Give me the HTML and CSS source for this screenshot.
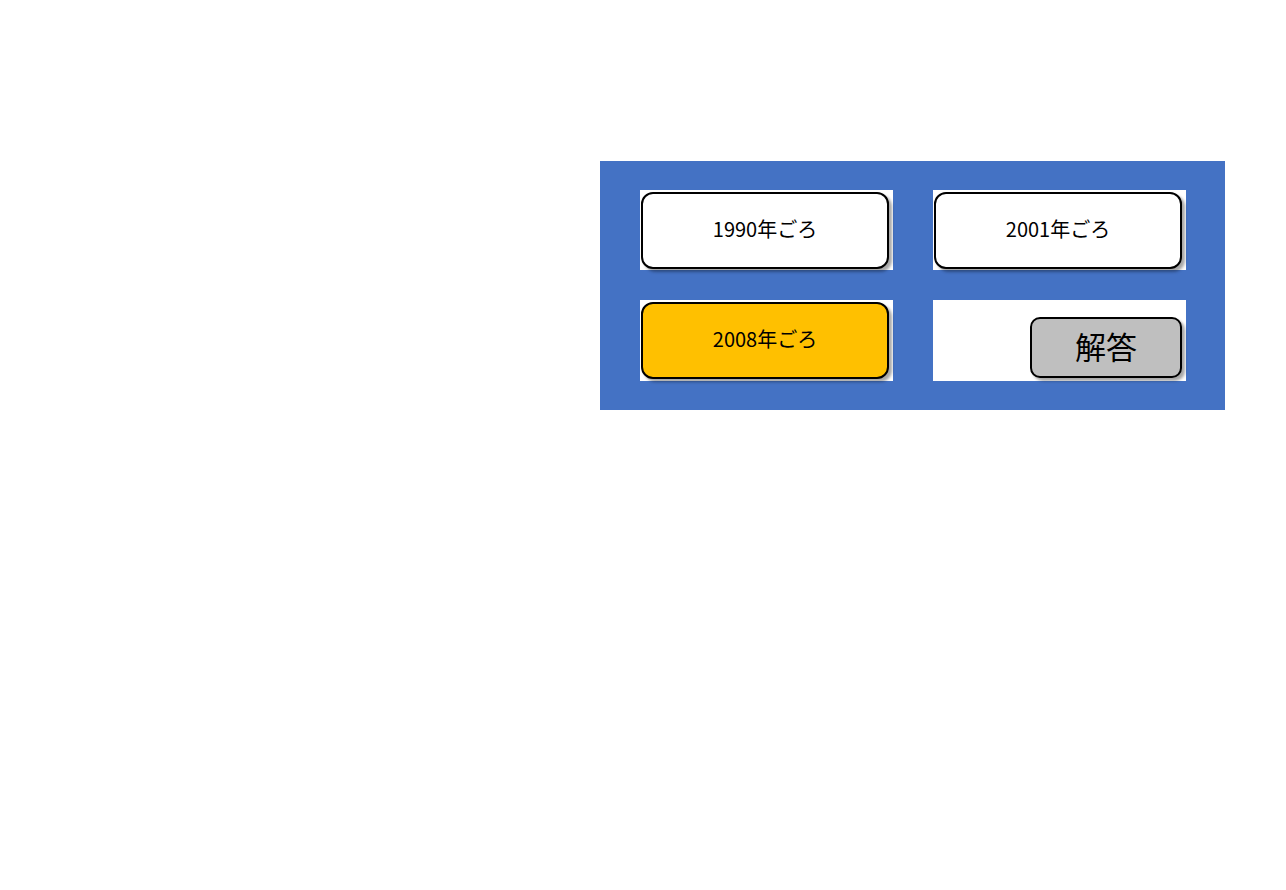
FILE: index.html
```html
<!DOCTYPE html>
<html lang="ja">
<head>
<meta charset="utf-8">
<title>Quiz</title>
<link rel="stylesheet" href="styles.css">
</head>
<body>
<div class="panel">
  <div class="cell"><div class="choice">1990年ごろ</div></div>
  <div class="cell"><div class="choice">2001年ごろ</div></div>
  <div class="cell"><div class="choice selected">2008年ごろ</div></div>
  <div class="cell cell-answer"><div class="answer">解答</div></div>
</div>
</body>
</html>
```
FILE: styles.css
```css
html, body {
  margin: 0;
  padding: 0;
  background: #ffffff;
}
body {
  width: 1286px;
  height: 890px;
  font-family: "Noto Sans CJK JP", "Noto Sans", sans-serif;
  color: #000;
}
.panel {
  margin: 161px 0 0 600px;
  width: 625px;
  box-sizing: border-box;
  background: #4472c4;
  padding: 29px 39px 29px 40px;
  display: grid;
  grid-template-columns: 253px 253px;
  grid-template-rows: 80px 81px;
  column-gap: 40px;
  row-gap: 30px;
}
.cell {
  background: #ffffff;
  padding: 2px 0 0 1px;
  box-sizing: border-box;
}
.choice {
  box-sizing: border-box;
  width: 248px;
  height: 77px;
  border: 2px solid #000;
  border-radius: 12px;
  background: #fff;
  box-shadow: 3px 3px 3px rgba(0, 0, 0, 0.35);
  display: flex;
  align-items: center;
  justify-content: center;
  padding-bottom: 4px;
  font-size: 20px;
  font-weight: 400;
  line-height: 1;
}
.choice.selected {
  background: #ffc000;
}
.cell-answer {
  padding: 17px 0 0 97px;
}
.answer {
  box-sizing: border-box;
  width: 152px;
  height: 61px;
  border: 2px solid #000;
  border-radius: 10px;
  background: #bfbfbf;
  box-shadow: 3px 3px 3px rgba(0, 0, 0, 0.35);
  display: flex;
  align-items: center;
  justify-content: center;
  padding-bottom: 4px;
  font-size: 31px;
  font-weight: 400;
  line-height: 1;
}
```
